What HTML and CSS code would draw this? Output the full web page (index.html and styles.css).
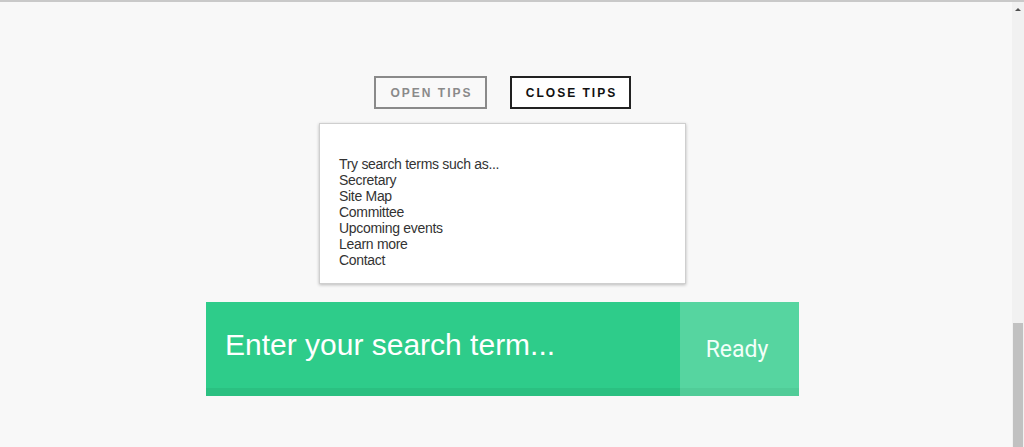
FILE: index.html
```html
<!DOCTYPE html>
<html>
<head>
<meta charset="utf-8">
<link rel="stylesheet" href="styles.css">
</head>
<body>
<div class="frame">
  <main class="page">
    <div class="controls">
      <button class="btn btn-open">OPEN TIPS</button>
      <button class="btn btn-close">CLOSE TIPS</button>
    </div>
    <div class="tips">
      <p>Try search terms such as...</p>
      <p>Secretary</p>
      <p>Site Map</p>
      <p>Committee</p>
      <p>Upcoming events</p>
      <p>Learn more</p>
      <p>Contact</p>
    </div>
    <form class="search">
      <div class="search-input">Enter your search term...</div>
      <div class="search-btn">Ready</div>
    </form>
  </main>
  <aside class="scrollbar">
    <div class="arrow"></div>
    <div class="thumb"></div>
  </aside>
</div>
</body>
</html>
```

FILE: styles.css
```css
html, body {
  margin: 0;
  height: 100%;
}
body {
  background: #f8f8f8;
  font-family: "Liberation Sans", Arial, sans-serif;
  overflow: hidden;
}
.frame {
  display: flex;
  height: 445px;
  border-top: 2px solid #c9c9c9;
}
.page {
  flex: 1;
  display: flex;
  flex-direction: column;
  align-items: center;
  padding-right: 7px;
  padding-top: 74px;
}
.controls {
  display: flex;
  gap: 23px;
}
.btn {
  box-sizing: border-box;
  height: 33px;
  background: #f9f9f9;
  font-family: "Liberation Sans", Arial, sans-serif;
  font-weight: bold;
  font-size: 12px;
  letter-spacing: 2px;
  padding: 0 0 0 2px;
  margin: 0;
}
.btn-open {
  width: 113px;
  border: 2px solid #8a8a8a;
  color: #8a8a8a;
}
.btn-close {
  width: 121px;
  border: 2px solid #222;
  color: #111;
  background: #fff;
}
.tips {
  box-sizing: border-box;
  width: 367px;
  height: 161px;
  margin-top: 14px;
  background: #fff;
  border: 1px solid #cfcfcf;
  box-shadow: 0 1px 3px rgba(0,0,0,0.25);
  padding: 32px 19px 0;
  font-size: 14px;
  line-height: 16px;
  letter-spacing: -0.3px;
  color: #333;
}
.tips p {
  margin: 0;
}
.search {
  display: flex;
  width: 593px;
  height: 94px;
  margin: 18px 0 0;
}
.search-input {
  box-sizing: border-box;
  width: 474px;
  background: #2ecc8a;
  border-bottom: 8px solid #2bc081;
  color: #fff;
  font-size: 30px;
  padding: 26px 0 0 19px;
}
.search-btn {
  box-sizing: border-box;
  flex: 1;
  background: #56d5a0;
  border-bottom: 8px solid #51cc98;
  color: #f2fff8;
  font-family: Roboto, "Liberation Sans", sans-serif;
  font-size: 23px;
  display: flex;
  align-items: center;
  justify-content: center;
  padding: 8px 5px 0 0;
}
.scrollbar {
  width: 12px;
  background: #f1f1f1;
  display: flex;
  flex-direction: column;
  align-items: center;
}
.arrow {
  margin-top: 6px;
  width: 0;
  height: 0;
  border-left: 3px solid transparent;
  border-right: 3px solid transparent;
  border-bottom: 3px solid #505050;
}
.thumb {
  margin-top: auto;
  width: 10px;
  height: 124px;
  background: #c1c1c1;
}
```
